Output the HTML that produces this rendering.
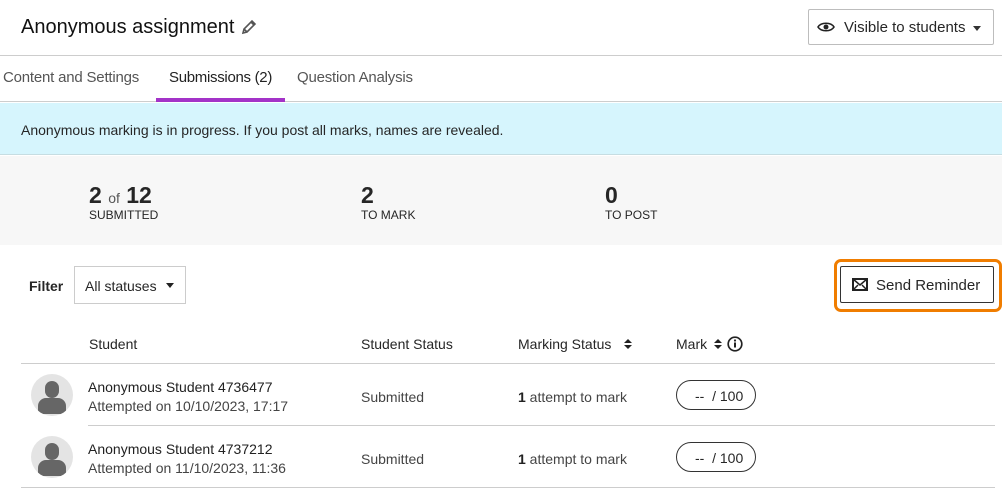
<!DOCTYPE html>
<html><head><style>
*{margin:0;padding:0;box-sizing:border-box}
body{width:1002px;height:492px;overflow:hidden;background:#fff;font-family:"Liberation Sans",sans-serif;color:#262626;position:relative}
.a{position:absolute;white-space:nowrap}
.hl{position:absolute;height:1px;background:#cdcdcd}
</style></head><body>
<div class="a" style="left:21px;top:16px;font-size:20px;color:#111">Anonymous assignment</div>
<svg class="a" style="left:240px;top:18px" width="18" height="18" viewBox="0 0 18 18"><path d="M3 15l1-4L12 3l3 3-8 8zM11 4l3 3M4 11l3 3" fill="none" stroke="#555" stroke-width="1.6"/></svg>
<div class="a" style="left:808px;top:9px;width:186px;height:36px;border:1px solid #bdbdbd;border-radius:2px"></div>
<svg class="a" style="left:817px;top:20px" width="18" height="14" viewBox="0 0 18 14"><path d="M1 7C4 2 14 2 17 7C14 12 4 12 1 7z" fill="none" stroke="#222" stroke-width="1.6"/><circle cx="9" cy="7" r="2.5" fill="#222"/></svg>
<div class="a" style="left:844px;top:19px;font-size:15px">Visible to students</div>
<div class="a" style="left:973px;top:26px;border:4px solid transparent;border-top:5px solid #333"></div>
<div class="hl" style="left:0;top:55px;width:1002px"></div>
<div class="a" style="left:3px;top:69px;font-size:15px;color:#555;letter-spacing:-0.2px">Content and Settings</div>
<div class="a" style="left:169px;top:69px;font-size:15px;color:#222;letter-spacing:-0.3px">Submissions (2)</div>
<div class="a" style="left:297px;top:69px;font-size:15px;color:#555;letter-spacing:-0.2px">Question Analysis</div>
<div class="hl" style="left:0;top:101px;width:1002px"></div>
<div class="a" style="left:156px;top:98px;width:129px;height:4px;background:#a333c8"></div>
<div class="a" style="left:0;top:103px;width:1002px;height:52px;background:#d6f5fd;border-bottom:1px solid #c6dde2"></div>
<div class="a" style="left:21px;top:122px;font-size:14px">Anonymous marking is in progress. If you post all marks, names are revealed.</div>
<div class="a" style="left:0;top:156px;width:1002px;height:89px;background:#f7f7f7"></div>
<div class="a" style="left:89px;top:182px;font-size:23px;font-weight:bold">2 <span style="font-size:14px;font-weight:normal;color:#555">of</span> 12</div>
<div class="a" style="left:89px;top:208px;font-size:12px">SUBMITTED</div>
<div class="a" style="left:361px;top:182px;font-size:23px;font-weight:bold">2</div>
<div class="a" style="left:361px;top:208px;font-size:12px">TO MARK</div>
<div class="a" style="left:605px;top:182px;font-size:23px;font-weight:bold">0</div>
<div class="a" style="left:605px;top:208px;font-size:12px">TO POST</div>
<div class="a" style="left:29px;top:278px;font-size:14px;font-weight:bold">Filter</div>
<div class="a" style="left:74px;top:266px;width:112px;height:38px;border:1px solid #ccc"></div>
<div class="a" style="left:85px;top:278px;font-size:14px">All statuses</div>
<div class="a" style="left:166px;top:283px;border:4px solid transparent;border-top:5px solid #222"></div>
<div class="a" style="left:834px;top:259px;width:168px;height:53px;border:3px solid #f07d00;border-radius:7px"></div>
<div class="a" style="left:840px;top:266px;width:154px;height:37px;border:1px solid #333;border-radius:2px"></div>
<svg class="a" style="left:852px;top:278px" width="16" height="13" viewBox="0 0 16 13"><rect x="1" y="1" width="14" height="11" fill="none" stroke="#222" stroke-width="2"/><path d="M1 1l7 6 7-6M1 12l5-5M15 12l-5-5" fill="none" stroke="#222" stroke-width="1.5"/></svg>
<div class="a" style="left:876px;top:277px;font-size:15px">Send Reminder</div>
<div class="a" style="left:89px;top:336px;font-size:14px">Student</div>
<div class="a" style="left:361px;top:336px;font-size:14px">Student Status</div>
<div class="a" style="left:518px;top:336px;font-size:14px">Marking Status</div>
<svg class="a" style="left:624px;top:338px" width="8" height="12" viewBox="0 0 8 12"><path d="M0 5L4 1 8 5zM0 7L4 11 8 7z" fill="#222"/></svg>
<div class="a" style="left:676px;top:336px;font-size:14px">Mark</div>
<svg class="a" style="left:714px;top:338px" width="8" height="12" viewBox="0 0 8 12"><path d="M0 5L4 1 8 5zM0 7L4 11 8 7z" fill="#222"/></svg>
<svg class="a" style="left:727px;top:336px" width="16" height="16" viewBox="0 0 16 16"><circle cx="8" cy="8" r="6.8" fill="none" stroke="#222" stroke-width="1.7"/><rect x="7" y="6.5" width="2" height="5" fill="#222"/><circle cx="8" cy="4.5" r="1.1" fill="#222"/></svg>
<div class="hl" style="left:21px;top:363px;width:974px"></div>
<div class="hl" style="left:88px;top:425px;width:907px"></div>
<div class="hl" style="left:21px;top:487px;width:974px"></div>

<div class="a" style="left:31px;top:374px;width:42px;height:42px;border-radius:50%;background:#e4e4e4;overflow:hidden"><div class="a" style="left:14px;top:7px;width:14px;height:17px;border-radius:7px;background:#666"></div><div class="a" style="left:7px;top:24px;width:28px;height:16px;border-radius:8px 8px 0 0;background:#666"></div></div>
<div class="a" style="left:88px;top:379px;font-size:14px;color:#222">Anonymous Student 4736477</div>
<div class="a" style="left:88px;top:398px;font-size:14px;color:#444">Attempted on 10/10/2023, 17:17</div>
<div class="a" style="left:361px;top:389px;font-size:14px;color:#444">Submitted</div>
<div class="a" style="left:518px;top:389px;font-size:14px;color:#444"><b style="color:#222">1</b> attempt to mark</div>
<div class="a" style="left:676px;top:380px;width:80px;height:30px;border:1px solid #333;border-radius:15px;font-size:14px;padding:7px 0 0 18px">--&nbsp; / 100</div>

<div class="a" style="left:31px;top:436px;width:42px;height:42px;border-radius:50%;background:#e4e4e4;overflow:hidden"><div class="a" style="left:14px;top:7px;width:14px;height:17px;border-radius:7px;background:#666"></div><div class="a" style="left:7px;top:24px;width:28px;height:16px;border-radius:8px 8px 0 0;background:#666"></div></div>
<div class="a" style="left:88px;top:441px;font-size:14px;color:#222">Anonymous Student 4737212</div>
<div class="a" style="left:88px;top:460px;font-size:14px;color:#444">Attempted on 11/10/2023, 11:36</div>
<div class="a" style="left:361px;top:451px;font-size:14px;color:#444">Submitted</div>
<div class="a" style="left:518px;top:451px;font-size:14px;color:#444"><b style="color:#222">1</b> attempt to mark</div>
<div class="a" style="left:676px;top:442px;width:80px;height:30px;border:1px solid #333;border-radius:15px;font-size:14px;padding:7px 0 0 18px">--&nbsp; / 100</div>
</body></html>
